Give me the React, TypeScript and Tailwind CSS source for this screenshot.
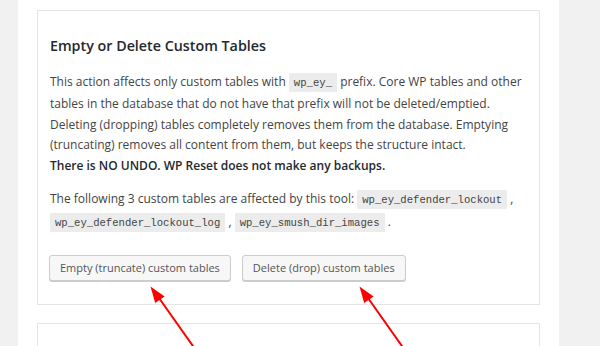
import type { ReactNode } from 'react';

function Code({ children }: { children: ReactNode }): JSX.Element {
  return (
    <code className="rounded-[1px] bg-[#ececec] px-[5px] pt-[4px] pb-[3px] font-['Liberation_Mono',monospace] text-[10.6px] text-[#444]">
      {children}
    </code>
  );
}

function Arrow({ dx }: { dx: number }): JSX.Element {
  return (
    <g transform={`translate(${dx} 0)`}>
      <line x1="159" y1="298" x2="200" y2="356" stroke="#ff0000" strokeWidth="2" />
      <polygon points="150.5,286.5 155.2,303 164.6,296.4" fill="#ff0000" />
    </g>
  );
}

export default function App(): JSX.Element {
  return (
    <div className="relative flex h-[346px] w-[600px] overflow-hidden bg-[#f1f1f1] font-['Open_Sans',sans-serif] text-[12px] text-[#444]">
      <div className="w-[18px] shrink-0" />
      <div className="w-[541px] shrink-0 bg-white px-[19px] pt-[10px]">
        <section className="border border-[#e5e5e5] bg-white px-[12px] pt-[24px] pb-[23px]">
          <h3 className="mb-[15px] text-[14.3px] leading-[22px] font-semibold text-[#23282d]">
            Empty or Delete Custom Tables
          </h3>
          <p className="leading-[20.75px]">
            This action affects only custom tables with <Code>wp_ey_</Code> prefix. Core WP tables and other
            tables in the database that do not have that prefix will not be deleted/emptied. Deleting (dropping)
            tables completely removes them from the database. Emptying (truncating) removes all content from
            them, but keeps the structure intact.
            <br />
            <strong className="font-semibold text-[#23282d]">There is NO UNDO. WP Reset does not make any backups.</strong>
          </p>
          <p className="mt-[11px] leading-[21.5px]">
            The following 3 custom tables are affected by this tool: <Code>wp_ey_defender_lockout</Code> ,{' '}
            <Code>wp_ey_defender_lockout_log</Code> , <Code>wp_ey_smush_dir_images</Code> .
          </p>
          <div className="mt-[20px] -ml-[1px] flex gap-[11px]">
            <button className="h-[26px] rounded-[3px] border border-[#ccc] bg-[#f7f7f7] px-[10px] text-[11px] text-[#555] shadow-[0_1px_0_#ccc]">
              Empty (truncate) custom tables
            </button>
            <button className="h-[26px] rounded-[3px] border border-[#ccc] bg-[#f7f7f7] px-[10px] text-[11px] text-[#555] shadow-[0_1px_0_#ccc]">
              Delete (drop) custom tables
            </button>
          </div>
        </section>
        <section className="mt-[18px] h-[60px] border border-[#e5e5e5] bg-white" />
      </div>
      <svg className="pointer-events-none absolute inset-0" width="600" height="346" viewBox="0 0 600 346">
        <Arrow dx={0} />
        <Arrow dx={209} />
      </svg>
    </div>
  );
}
